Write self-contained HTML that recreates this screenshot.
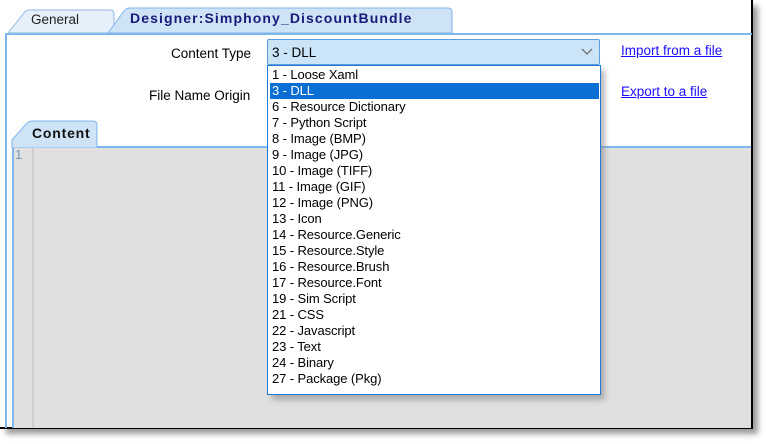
<!DOCTYPE html>
<html><head><style>
*{margin:0;padding:0;box-sizing:border-box}
body{width:766px;height:444px;background:#fff;position:relative;overflow:hidden;font-family:"Liberation Sans",sans-serif;font-size:12px;color:#000}
.a{position:absolute}
.shadow{left:6px;top:6px;width:752px;height:428px;background:#9a9a9a;filter:blur(3px)}
.frame{left:0;top:0;width:753px;height:429px;background:#fff;border:2px solid #000;border-left:none;border-top:none}
.lbl{font-size:13.5px}
.item{position:absolute;left:2px;width:329px;height:16px;line-height:16px;padding-left:2px;letter-spacing:-0.1px;font-size:13px}
a{color:#1a0dff;text-decoration:underline;font-size:13.5px;position:absolute}
</style></head><body>
<div class="a shadow"></div>
<div class="a frame"></div>
<div class="a" style="left:5px;top:33px;width:747px;height:2px;background:#7eb6ee"></div>
<div class="a" style="left:5px;top:33px;width:2px;height:395px;background:#7eb6ee"></div>
<svg class="a" style="left:6px;top:6px" width="450" height="30">
<path d="M2 27 L18 7 Q20 4 24 4 L104 4 Q108 4 108 8 L108 27 Z" fill="#e6f0fb" stroke="#8fb8e6"/>
<path d="M102 27 L118 5 Q120 2 124 2 L442 2 Q446 2 446 6 L446 27 Z" fill="#cfe3f7" stroke="#7eb6ee"/>
</svg>
<div class="a" style="left:31px;top:12px;font-size:13.5px;color:#222">General</div>
<div class="a" style="left:130px;top:10px;font-size:14px;font-weight:bold;color:#1a1a7a;letter-spacing:1.1px">Designer:Simphony_DiscountBundle</div>
<div class="a lbl" style="left:171px;top:46px">Content Type</div>
<div class="a lbl" style="left:149px;top:88px">File Name Origin</div>
<a style="left:621px;top:43px">Import from a file</a>
<a style="left:621px;top:84px">Export to a file</a>
<div class="a" style="left:12px;top:146px;width:739px;height:282px;background:#e0e0e0"></div>
<div class="a" style="left:12px;top:146px;width:739px;height:2px;background:#7eb6ee"></div>
<div class="a" style="left:12px;top:146px;width:2px;height:282px;background:#7eb6ee"></div>
<div class="a" style="left:32px;top:148px;width:2px;height:280px;background:#cfcfcf"></div>
<div class="a" style="left:15px;top:147px;font-size:13px;color:#7a9ab5">1</div>
<svg class="a" style="left:11px;top:120px" width="90" height="28">
<path d="M1 28 L1 20 L16 3 Q18 1 22 1 L82 1 Q86 1 86 5 L86 28 Z" fill="#cfe3f7" stroke="#7eb6ee"/>
</svg>
<div class="a" style="left:32px;top:125px;font-size:14px;font-weight:bold;color:#111;letter-spacing:0.8px">Content</div>
<div class="a" style="left:267px;top:39px;width:333px;height:26px;background:#cce4f7;border:1px solid #5a9de0;border-radius:2px"></div>
<div class="a" style="left:272px;top:45px;font-size:13.5px">3 - DLL</div>
<svg class="a" style="left:581px;top:48px" width="12" height="8"><path d="M1 1 L6 6 L11 1" fill="none" stroke="#666" stroke-width="1.2"/></svg>
<div class="a" style="left:272px;top:70px;width:333px;height:330px;background:#888;filter:blur(3px);opacity:.6"></div>
<div class="a" style="left:267px;top:65px;width:334px;height:330px;background:#fff;border:1px solid #1e7ad6">
<div class="item" style="top:1px">1 - Loose Xaml</div>
<div class="item" style="top:17px;background:#0a6fd3;color:#fff">3 - DLL</div>
<div class="item" style="top:33px">6 - Resource Dictionary</div>
<div class="item" style="top:49px">7 - Python Script</div>
<div class="item" style="top:65px">8 - Image (BMP)</div>
<div class="item" style="top:81px">9 - Image (JPG)</div>
<div class="item" style="top:97px">10 - Image (TIFF)</div>
<div class="item" style="top:113px">11 - Image (GIF)</div>
<div class="item" style="top:129px">12 - Image (PNG)</div>
<div class="item" style="top:145px">13 - Icon</div>
<div class="item" style="top:161px">14 - Resource.Generic</div>
<div class="item" style="top:177px">15 - Resource.Style</div>
<div class="item" style="top:193px">16 - Resource.Brush</div>
<div class="item" style="top:209px">17 - Resource.Font</div>
<div class="item" style="top:225px">19 - Sim Script</div>
<div class="item" style="top:241px">21 - CSS</div>
<div class="item" style="top:257px">22 - Javascript</div>
<div class="item" style="top:273px">23 - Text</div>
<div class="item" style="top:289px">24 - Binary</div>
<div class="item" style="top:305px">27 - Package (Pkg)</div>
</div>
</body></html>
